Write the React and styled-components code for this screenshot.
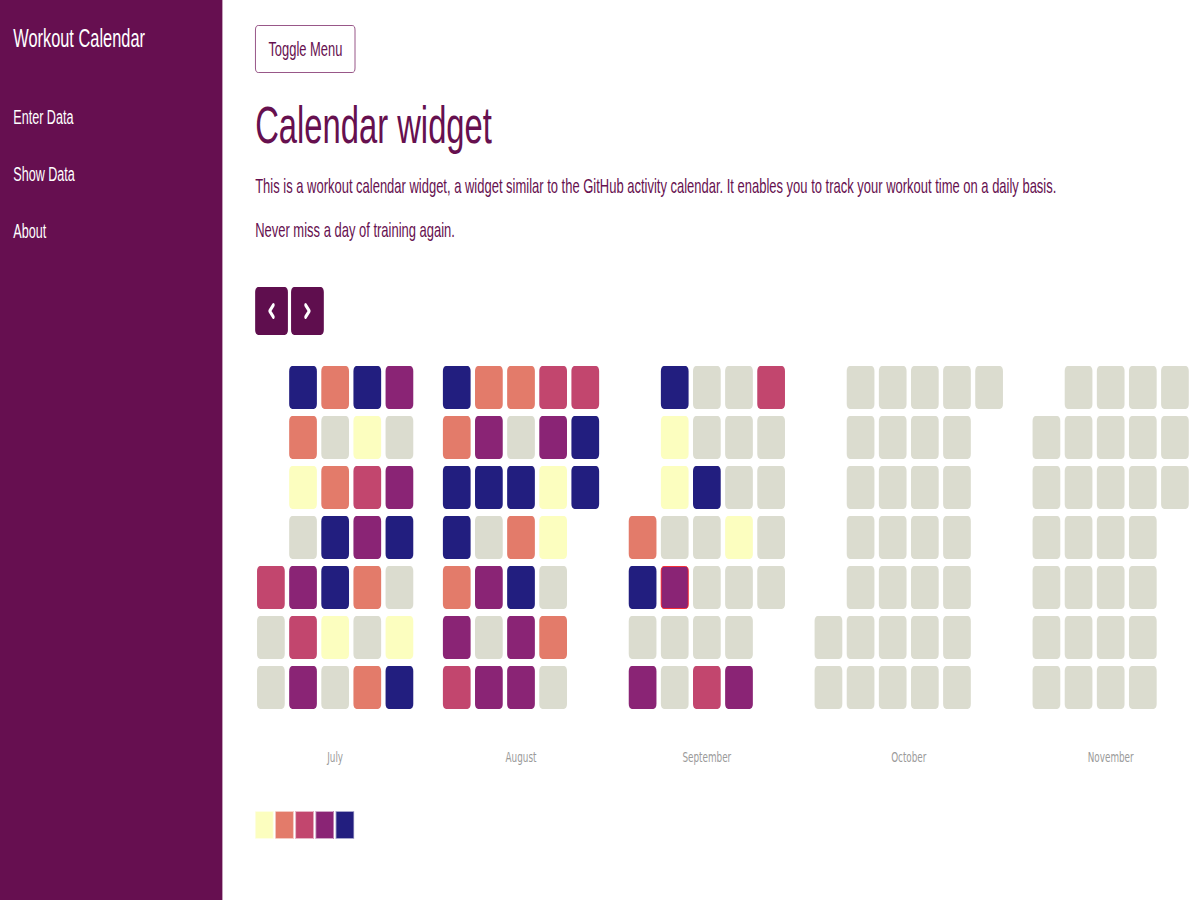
import React from 'react';
import styled, { createGlobalStyle } from 'styled-components';

const SQUEEZE = 0.63;

const LEVEL_COLORS = ['#dbdccf', '#fcfebf', '#e37b6a', '#c2466e', '#8a2475', '#221e7f'];

const MONTHS = [
    { name: 'July', month: 6, data: [3,0,0,5,2,1,0,4,3,4,2,0,2,5,5,1,0,5,1,3,4,2,0,2,4,0,4,5,0,1,5] },
    { name: 'August', month: 7, data: [5,2,5,5,2,4,3,2,4,5,0,4,0,4,2,0,5,2,5,4,4,3,4,1,1,0,2,0,3,5,5] },
    { name: 'September', month: 8, data: [2,5,0,4,5,1,1,0,4,0,0,0,0,5,0,0,0,3,0,0,0,1,0,0,4,3,0,0,0,0], today: 9 },
    { name: 'October', month: 9, data: [] },
    { name: 'November', month: 10, data: [] },
];

const GlobalStyle = createGlobalStyle`
    html, body {
        margin: 0;
        padding: 0;
        overflow: hidden;
        background: #fff;
    }
    body {
        font-family: "Liberation Sans", Arial, sans-serif;
    }
`;

const Stage = styled.div`
    width: ${1200 / SQUEEZE}px;
    min-height: 900px;
    display: flex;
    transform: scaleX(${SQUEEZE});
    transform-origin: 0 0;
`;

const Sidebar = styled.nav`
    width: 353px;
    flex-shrink: 0;
    min-height: 900px;
    box-sizing: border-box;
    padding: 23px 21px;
    background: #660f50;
    color: #fff;
`;

const Brand = styled.h3`
    margin: 0;
    font-size: 26px;
    line-height: 31px;
    font-weight: 400;
`;

const NavList = styled.ul`
    list-style: none;
    margin: 51px 0 0;
    padding: 0;
    display: flex;
    flex-direction: column;
    gap: 33px;
    li {
        font-size: 20px;
        line-height: 24px;
    }
`;

const Main = styled.main`
    flex: 1;
    padding: 25px 0 0 52px;
    color: #66104f;
`;

const ToggleButton = styled.button`
    height: 48px;
    padding: 0 20px;
    border: 1.5px solid #80306c;
    border-radius: 5px;
    background: #fff;
    color: #66104f;
    font-family: "Liberation Sans", Arial, sans-serif;
    font-size: 20.5px;
`;

const Title = styled.h1`
    margin: 22px 0 0;
    font-size: 52px;
    line-height: 61px;
    font-weight: 400;
`;

const Intro = styled.p`
    margin: 16px 0 0;
    font-size: 20.6px;
    line-height: 28px;
`;

const Pager = styled.div`
    display: flex;
    gap: 5px;
    margin-top: 43px;
`;

const ArrowButton = styled.button`
    width: 52px;
    height: 48px;
    padding: 0;
    border: none;
    border-radius: 5px;
    background: #5f0e4e;
    display: flex;
    align-items: center;
    justify-content: center;
`;

const Calendar = styled.div`
    display: flex;
    gap: 47px;
    margin: 31px 0 0 3px;
`;

const MonthBlock = styled.div`
    display: flex;
    flex-direction: column;
`;

const DayGrid = styled.div`
    display: grid;
    grid-template-rows: repeat(7, 43px);
    grid-auto-columns: 44px;
    grid-auto-flow: column;
    gap: 7px;
`;

const Day = styled.div`
    border-radius: 5px;
    box-sizing: border-box;
    background: ${p => LEVEL_COLORS[p.$level]};
    border: ${p => p.$today ? '1.5px solid #ff1a1a' : 'none'};
`;

const MonthLabel = styled.div`
    margin-top: 40px;
    text-align: center;
    font-family: "DejaVu Sans", sans-serif;
    font-size: 14px;
    line-height: 17px;
    color: #9a9a9a;
`;

const Legend = styled.div`
    display: flex;
    gap: 3px;
    margin-top: 45px;
`;

const LegendSwatch = styled.div`
    width: 29px;
    height: 28px;
    box-sizing: border-box;
    border: 1px solid rgba(255, 255, 255, 0.6);
    background: ${p => LEVEL_COLORS[p.$level]};
`;

const Chevron = ({ dir }) => (
    <svg width="16" height="18" viewBox="0 0 16 18" fill="none" stroke="#fff" strokeWidth="4" strokeLinecap="round" strokeLinejoin="round">
        {dir === 'left' ? <path d="M11 3 L5 9 L11 15" /> : <path d="M5 3 L11 9 L5 15" />}
    </svg>
);

const Month = ({ name, month, data, today }) => {
    const first = new Date(2021, month, 1).getDay();
    const count = new Date(2021, month + 1, 0).getDate();
    const days = Array.from({ length: count }, (_, i) => i + 1);
    return (
        <MonthBlock>
            <DayGrid>
                {days.map(d => (
                    <Day
                        key={d}
                        $level={data[d - 1] || 0}
                        $today={d === today}
                        style={d === 1 ? { gridRowStart: first + 1 } : undefined}
                    />
                ))}
            </DayGrid>
            <MonthLabel>{name}</MonthLabel>
        </MonthBlock>
    );
};

const App = () => {
    return (
        <>
            <GlobalStyle />
            <Stage>
                <Sidebar>
                    <Brand>Workout Calendar</Brand>
                    <NavList>
                        <li>Enter Data</li>
                        <li>Show Data</li>
                        <li>About</li>
                    </NavList>
                </Sidebar>
                <Main>
                    <ToggleButton>Toggle Menu</ToggleButton>
                    <Title>Calendar widget</Title>
                    <Intro>
                        This is a workout calendar widget, a widget similar to the GitHub activity calendar. It enables you to track your workout time on a daily basis.
                    </Intro>
                    <Intro>Never miss a day of training again.</Intro>
                    <Pager>
                        <ArrowButton><Chevron dir="left" /></ArrowButton>
                        <ArrowButton><Chevron dir="right" /></ArrowButton>
                    </Pager>
                    <Calendar>
                        {MONTHS.map(m => <Month key={m.name} {...m} />)}
                    </Calendar>
                    <Legend>
                        {[1, 2, 3, 4, 5].map(l => <LegendSwatch key={l} $level={l} />)}
                    </Legend>
                </Main>
            </Stage>
        </>
    );
};

export default App;
